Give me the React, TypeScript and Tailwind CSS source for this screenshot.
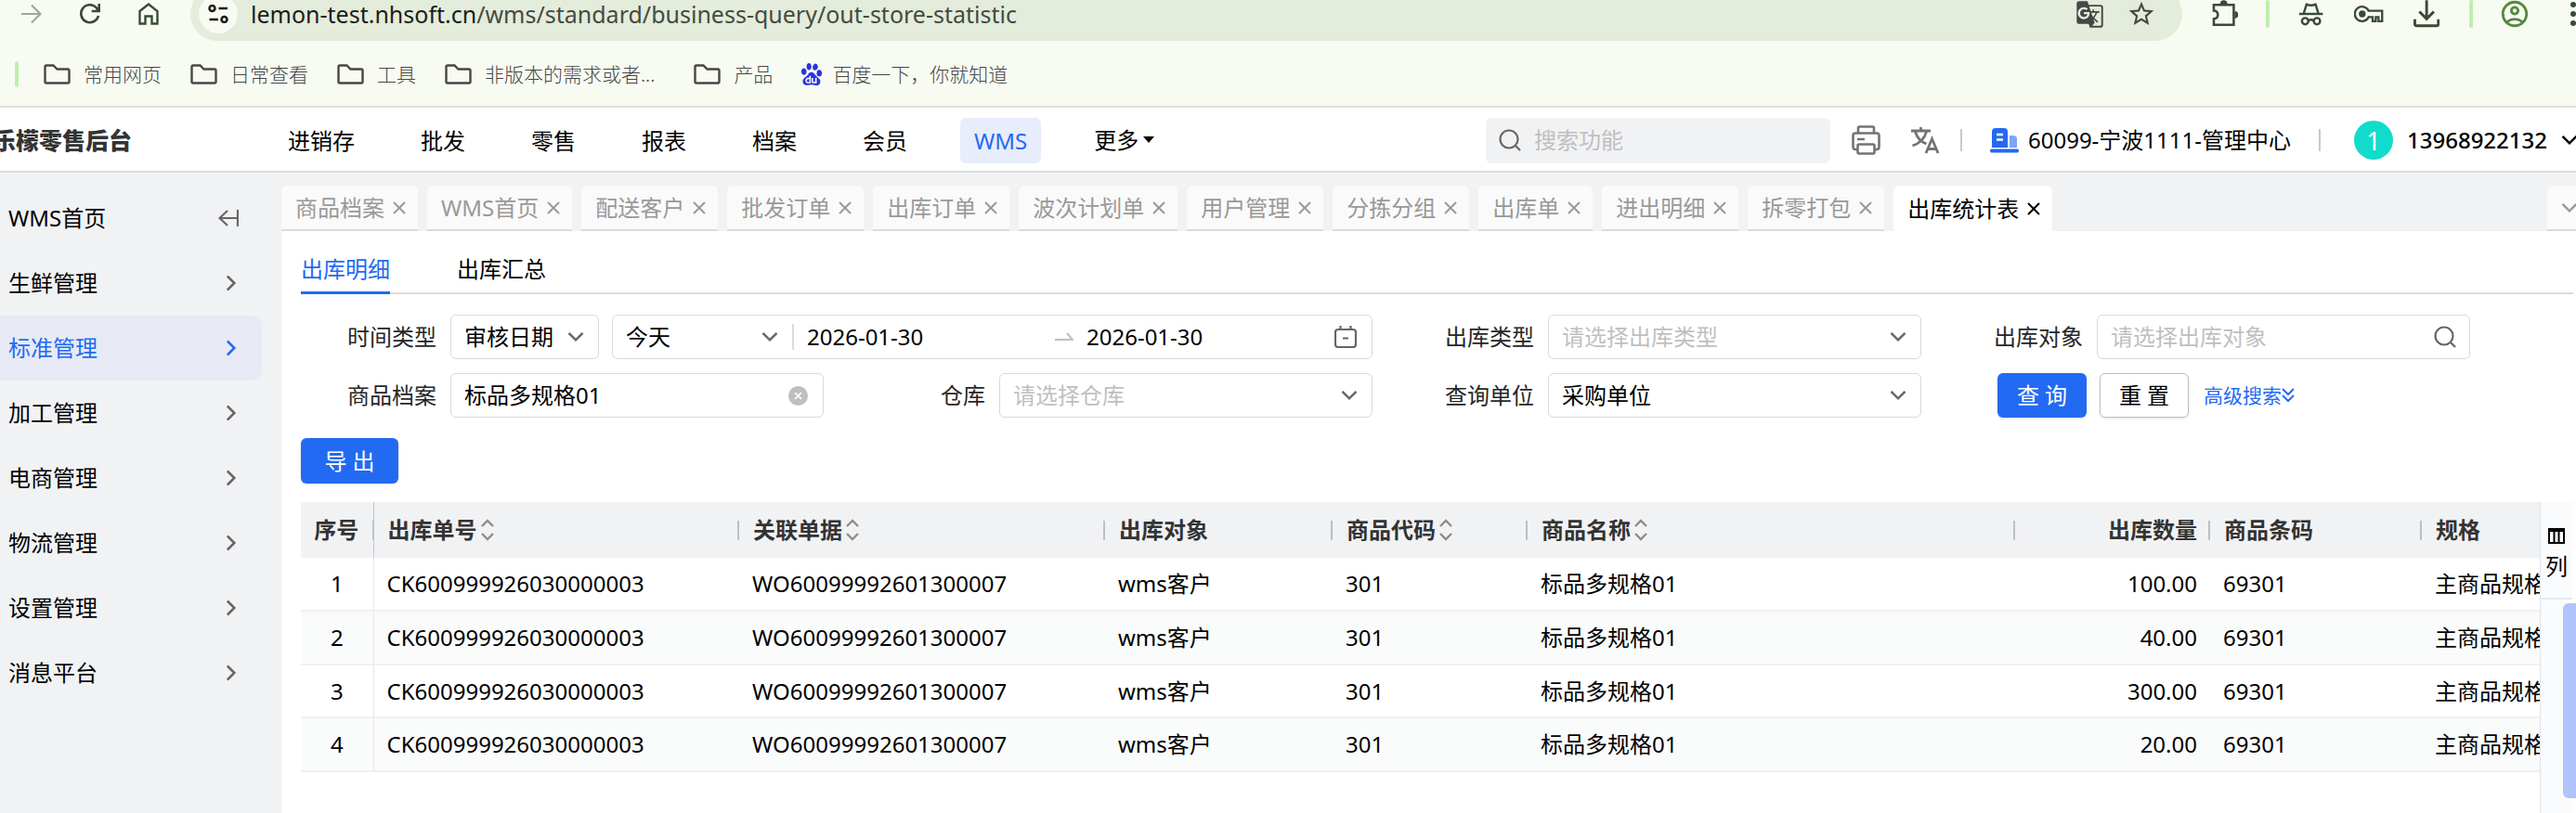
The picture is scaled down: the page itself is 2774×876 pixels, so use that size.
import React from "react";
import { MdGTranslate, MdOutlineAccountCircle, MdStarBorder } from "react-icons/md";
import { SiBaidu } from "react-icons/si";

type IconProps = { className?: string };

function Chevron({ className = "" }: IconProps): React.JSX.Element {
  return (
    <svg viewBox="0 0 24 24" fill="none" stroke="currentColor" strokeWidth="3" className={className}>
      <path d="M3 7l9 9 9-9" />
    </svg>
  );
}

function Close({ className = "" }: IconProps): React.JSX.Element {
  return (
    <svg viewBox="0 0 16 16" fill="none" stroke="currentColor" strokeWidth="2" className={className}>
      <path d="M2 2l12 12M14 2L2 14" />
    </svg>
  );
}

function Search({ className = "" }: IconProps): React.JSX.Element {
  return (
    <svg viewBox="0 0 24 24" fill="none" stroke="currentColor" strokeWidth="2.2" className={className}>
      <circle cx="11" cy="11" r="9.5" />
      <path d="M17.5 17.5L23 23" />
    </svg>
  );
}

function Folder(): React.JSX.Element {
  return (
    <svg viewBox="0 0 29 22" fill="none" stroke="#474747" strokeWidth="2.4" className="h-[22px] w-[29px] shrink-0">
      <path d="M3 1.5h7.5l4 4H26q1.5 0 1.5 1.5v12q0 1.5-1.5 1.5H3q-1.5 0-1.5-1.5V3Q1.5 1.5 3 1.5z" />
    </svg>
  );
}

function SortIcon(): React.JSX.Element {
  return (
    <svg viewBox="0 0 14 24" fill="none" stroke="#8c8c8c" strokeWidth="2.4" className="h-6 w-3.5">
      <path d="M1 8l6-6 6 6M1 16l6 6 6-6" />
    </svg>
  );
}

const folders = ["常用网页", "日常查看", "工具"];
const navItems = ["进销存", "批发", "零售", "报表", "档案", "会员", "WMS"];
const menus = ["生鲜管理", "标准管理", "加工管理", "电商管理", "物流管理", "设置管理", "消息平台"];
const tabs = [
  "商品档案",
  "WMS首页",
  "配送客户",
  "批发订单",
  "出库订单",
  "波次计划单",
  "用户管理",
  "分拣分组",
  "出库单",
  "进出明细",
  "拆零打包",
  "出库统计表",
];
const columns = [
  { title: "序号", width: "w-[78px]", sort: false },
  { title: "出库单号", width: "w-[394px]", sort: true },
  { title: "关联单据", width: "w-[394px]", sort: true },
  { title: "出库对象", width: "w-[245px]", sort: false },
  { title: "商品代码", width: "w-[210px]", sort: true },
  { title: "商品名称", width: "w-[525px]", sort: true },
  { title: "出库数量", width: "w-[210px]", sort: false },
  { title: "商品条码", width: "w-[228px]", sort: false },
  { title: "规格", width: "w-[220px]", sort: false },
];
const quantities = ["100.00", "40.00", "300.00", "20.00"];

function BrowserBar(): React.JSX.Element {
  return (
    <div className="h-[116px] overflow-hidden border-b-2 border-[#dde3d6] bg-[#f8fbf2] text-[#3a4a38]">
      <div className="-mt-3.5 flex h-[58px] items-center">
        <div className="flex w-[205px] shrink-0 items-center gap-[41px] pl-[23px]">
          <button aria-label="前进" className="text-[#a2a69d]">
            <svg viewBox="0 0 22 22" fill="none" stroke="currentColor" strokeWidth="2.2" className="size-[22px]">
              <path d="M0 11h20M11 1.5l9.5 9.5-9.5 9.5" />
            </svg>
          </button>
          <button aria-label="刷新">
            <svg viewBox="0 0 22 22" fill="none" stroke="currentColor" strokeWidth="2.6" className="size-[22px]">
              <path d="M20 13a9.500 9.500 0 1 1-2-8.500l2 3.500M20.700 0v8h-8" />
            </svg>
          </button>
          <button aria-label="主页">
            <svg viewBox="0 0 22 24" fill="none" stroke="currentColor" strokeWidth="2.4" className="h-6 w-[22px]">
              <path d="M1.500 9L11 1.500 20.500 9v13.500h-6v-8h-7v8h-6z" />
            </svg>
          </button>
        </div>
        <div className="flex h-full flex-1 items-center rounded-full bg-[#e4ecdb] pr-7 pl-[9px]">
          <button
            aria-label="网站信息"
            className="flex size-[42px] items-center justify-center rounded-full bg-[#f8fbf2] text-[#1c1c1c]"
          >
            <svg viewBox="0 0 22 20" fill="none" stroke="currentColor" strokeWidth="2.5" className="h-5 w-[22px]">
              <circle cx="4.5" cy="4" r="3" />
              <path d="M11.5 4H21M1.5 16H11" />
              <circle cx="17.5" cy="16" r="3" />
            </svg>
          </button>
          <div className="flex-1 pl-3.5 text-[25px] leading-7 text-[#444b40]">
            <span className="text-[#1b1d1a]">lemon-test.nhsoft.cn</span>/wms/standard/business-query/out-store-statistic
          </div>
          <div className="flex items-center gap-6 text-[#474747]">
            <MdGTranslate className="size-[31px]" />
            <MdStarBorder className="size-8" />
          </div>
        </div>
        <div className="flex w-[424px] shrink-0 items-center overflow-hidden pl-8">
          <svg viewBox="0 0 29 30" className="h-[30px] w-[29px]" fill="none" stroke="currentColor" strokeWidth="2.6">
            <path d="M2 5h22v22H2v-6.5q4.500-.5 4.500-4.500T2 11.500z" />
            <path d="M9 4a4 4 0 0 1 8 0zM25 12a4 4 0 0 1 0 8z" fill="currentColor" stroke="none" />
          </svg>
          <i className="ml-[30px] h-[30px] w-1 rounded-full bg-[#bdf0ad]" />
          <svg viewBox="0 0 26 26" className="ml-8 size-[26px]" fill="none" stroke="currentColor" strokeWidth="2.5">
            <path d="M0 13h26" />
            <path d="M5 12L8 2.500q5 2 10 0L21 12" />
            <circle cx="6.5" cy="21" r="3.5" />
            <circle cx="19.5" cy="21" r="3.5" />
            <path d="M10 20.500q3-2 6 0" />
          </svg>
          <svg viewBox="0 0 33 20" className="ml-[33px] h-5 w-[33px]" fill="none" stroke="currentColor" strokeWidth="2.4">
            <path d="M16 6.500A8 8 0 1 0 16 13.500h4.500V18h3.500v-4.500h3V18h4V6.500z" />
            <circle cx="9" cy="10" r="3.8" fill="currentColor" stroke="none" />
          </svg>
          <svg viewBox="0 0 29 30" className="ml-8 h-[30px] w-[29px]" fill="none" stroke="currentColor" strokeWidth="3">
            <path d="M14.500 0v20M6.500 12.500l8 8 8-8M1.500 21v5q0 2 2 2h22q2 0 2-2v-5" />
          </svg>
          <i className="ml-8 h-[30px] w-1 rounded-full bg-[#bdf0ad]" />
          <MdOutlineAccountCircle className="ml-7 size-[34px] shrink-0 text-[#56883f]" />
          <svg viewBox="0 0 6 26" className="ml-[43px] h-[26px] w-1.5 shrink-0" fill="currentColor">
            <circle cx="3" cy="3" r="3" />
            <circle cx="3" cy="13" r="3" />
            <circle cx="3" cy="23" r="3" />
          </svg>
        </div>
      </div>
      <div className="flex h-[72px] items-center text-[21px] font-light text-[#454746]">
        <i className="mr-[27px] ml-4 h-7 w-1 rounded-full bg-[#bdf0ad]" />
        {folders.map((name) => (
          <a key={name} href="#" className="mr-[31px] flex items-center gap-3.5">
            <Folder />
            {name}
          </a>
        ))}
        <a href="#" className="mr-[42px] flex items-center gap-3.5">
          <Folder />
          非版本的需求或者...
        </a>
        <a href="#" className="mr-[30px] flex items-center gap-3.5">
          <Folder />
          产品
        </a>
        <a href="#" className="flex items-center gap-2.5">
          <SiBaidu className="size-6 text-[#2932e1]" />
          百度一下，你就知道
        </a>
      </div>
    </div>
  );
}

function Header(): React.JSX.Element {
  return (
    <header className="flex h-[70px] items-center border-b-2 border-[#d9dadb] bg-white pt-0.5">
      <div className="w-[296px] shrink-0">
        <p className="-ml-2 text-[25px] font-black text-[#333]">乐檬零售后台</p>
      </div>
      <nav className="flex flex-1 items-center gap-[43px]">
        {navItems.map((name) => (
          <a
            key={name}
            href="#"
            className={
              name === "WMS"
                ? "rounded-md bg-[#e7edfb] px-[15px] leading-[49px] text-[#236af2]"
                : "px-3.5 leading-[49px]"
            }
          >
            {name}
          </a>
        ))}
        <button className="flex items-center gap-1 px-3.5">
          更多
          <svg viewBox="0 0 14 8" className="h-2 w-3.5">
            <path d="M1 0h12L7 7z" />
          </svg>
        </button>
      </nav>
      <div className="flex h-[49px] w-[371px] items-center gap-3.5 rounded-md bg-[#f1f2f4] pl-3.5 text-[#666]">
        <Search className="size-6" />
        <input
          aria-label="搜索功能"
          placeholder="搜索功能"
          className="w-64 outline-none placeholder:text-[#bfbfbf]"
        />
      </div>
      <button aria-label="打印" className="ml-[23px] text-[#737373]">
        <svg viewBox="0 0 31 32" fill="none" stroke="currentColor" strokeWidth="2.6" className="h-8 w-[31px]">
          <path d="M7 8.500V3q0-1.500 1.500-1.500h14Q24 1.500 24 3v5.500M6 26H4q-2.500 0-2.500-2.500V11Q1.500 8.500 4 8.500h23q2.500 0 2.500 2.500v12.500Q29.500 26 27 26h-2M6.500 22q0-1.500 1.500-1.500h15q1.500 0 1.500 1.500v7q0 1.500-1.500 1.500H8q-1.500 0-1.500-1.500zM6 15h8" />
        </svg>
      </button>
      <button aria-label="语言" className="ml-[33px] text-[#737373]">
        <svg viewBox="0 0 31 30" fill="none" stroke="currentColor" strokeWidth="2.8" className="h-[30px] w-[31px]">
          <path d="M0 5h21M10.500 1v4M4.500 6q3 10 12 13M16.500 6q-3 11-15 15" />
          <path d="M16 29l6.500-15.500L29 29M18.500 24.500h8.500" />
        </svg>
      </button>
      <i className="ml-[22px] h-6 w-0.5 bg-[#c8c8c8]" />
      <div className="ml-[30px] flex items-center gap-2.5">
        <svg viewBox="0 0 31 27" className="h-[27px] w-[31px]" fill="#236af2">
          <path d="M2 21V4q0-4 4-4h9q4 0 4 4v17zM1.500 22.500h28q1.500 0 1.500 2t-1.500 2h-28Q0 26.500 0 24.500t1.500-2z" />
          <path d="M21 8h4q4 0 4 4v9h-8z" opacity="0.6" />
          <path d="M7 7h7M7 12.500h7" stroke="#fff" strokeWidth="2.4" />
        </svg>
        60099-宁波1111-管理中心
      </div>
      <i className="ml-[30px] h-6 w-0.5 bg-[#c8c8c8]" />
      <span className="ml-9 flex size-[42px] items-center justify-center rounded-full bg-[#0fdccb] text-[28px] text-white">
        1
      </span>
      <button className="ml-[15px] flex w-[182px] shrink-0 items-center gap-3.5 overflow-hidden font-medium">
        13968922132
        <Chevron className="size-5 shrink-0" />
      </button>
    </header>
  );
}

function Sidebar(): React.JSX.Element {
  return (
    <aside className="w-[303px] shrink-0 pt-3.5">
      <div className="flex h-[70px] items-center justify-between pr-[46px] pl-[9px]">
        <a href="#">WMS首页</a>
        <button aria-label="收起菜单" className="text-[#666]">
          <svg viewBox="0 0 22 18" fill="none" stroke="currentColor" strokeWidth="2.2" className="h-[18px] w-[22px]">
            <path d="M21 0v18M20 9H2M10 1L1.500 9l8.500 8" />
          </svg>
        </button>
      </div>
      {menus.map((name) => (
        <button
          key={name}
          className={
            name === "标准管理"
              ? "flex h-[70px] w-[282px] items-center justify-between rounded-r-xl bg-[#e7eaf5] pr-[23px] pl-[9px] text-[#236af2]"
              : "flex h-[70px] w-[282px] items-center justify-between pr-[23px] pl-[9px]"
          }
        >
          {name}
          <Chevron className={name === "标准管理" ? "size-5 -rotate-90" : "size-5 -rotate-90 text-[#666]"} />
        </button>
      ))}
    </aside>
  );
}

function PageTabs(): React.JSX.Element {
  return (
    <div className="flex gap-2.5 pt-3.5">
      {tabs.map((name) => (
        <div
          key={name}
          className={
            name === "出库统计表"
              ? "flex h-[49px] items-center gap-2 rounded-t-md bg-white pr-3 pl-[15px]"
              : "flex h-[49px] items-center gap-2 rounded-t-md border-b-2 border-[#dadada] bg-[#fafafa] pr-3 pl-[15px] text-[#999]"
          }
        >
          <button className="leading-[45px]">{name}</button>
          <button aria-label={"关闭" + name}>
            <Close className="size-4" />
          </button>
        </div>
      ))}
      <button
        aria-label="更多页签"
        className="ml-auto flex h-[49px] w-[31px] items-center overflow-hidden rounded-tl-md border-b-2 border-[#dadada] bg-[#fafafa] pl-3.5 text-[#999]"
      >
        <Chevron className="size-5 shrink-0" />
      </button>
    </div>
  );
}

type FieldProps = {
  id: string;
  label: string;
  className?: string;
  children: React.ReactNode;
};

function Field({ id, label, className = "", children }: FieldProps): React.JSX.Element {
  return (
    <div className={"flex items-center pr-7 " + className}>
      <label htmlFor={id} className="w-[161px] shrink-0 pr-[15px] text-right text-[#262626]">
        {label}
      </label>
      {children}
    </div>
  );
}

type SelectProps = { id: string; value: string; className: string; label?: string };

function Select({ id, value, className, label }: SelectProps): React.JSX.Element {
  return (
    <div className={"relative flex h-12 items-center rounded-md " + className}>
      <select id={id} aria-label={label} className="h-full w-full appearance-none pl-3.5 outline-none">
        <option>{value}</option>
      </select>
      <Chevron className="pointer-events-none absolute right-3.5 size-5 text-[#666]" />
    </div>
  );
}

function Filters(): React.JSX.Element {
  return (
    <form className="mt-[22px] mr-[86px] grid grid-cols-4 gap-y-[15px]">
      <Field id="time-type" label="时间类型" className="col-span-2">
        <Select id="time-type" value="审核日期" className="mr-3.5 w-40 shrink-0 border border-[#d9d9d9]" />
        <div className="flex h-12 flex-1 items-center rounded-md border border-[#d9d9d9] pr-4">
          <Select id="range" label="时间范围" value="今天" className="w-[193px] shrink-0" />
          <i className="h-7 w-0.5 shrink-0 bg-[#dcdcdc]" />
          <input aria-label="开始日期" defaultValue="2026-01-30" className="w-0 flex-1 pl-3.5 outline-none" />
          <svg viewBox="0 0 20 10" fill="none" stroke="#bfbfbf" strokeWidth="2" className="h-2.5 w-5">
            <path d="M0 8h19l-6-7" />
          </svg>
          <input aria-label="结束日期" defaultValue="2026-01-30" className="w-0 flex-1 pl-3.5 outline-none" />
          <svg viewBox="0 0 24 24" fill="none" stroke="#666" strokeWidth="2.2" className="size-6">
            <rect x="1" y="4" width="22" height="19" rx="3" />
            <path d="M6.500 0v5M17.500 0v5M9 13.500h6" />
          </svg>
        </div>
      </Field>
      <Field id="out-type" label="出库类型">
        <Select id="out-type" value="请选择出库类型" className="flex-1 border border-[#d9d9d9] text-[#bfbfbf]" />
      </Field>
      <Field id="out-target" label="出库对象">
        <div className="flex h-12 flex-1 items-center rounded-md border border-[#d9d9d9] pr-3.5 pl-3.5">
          <input
            id="out-target"
            placeholder="请选择出库对象"
            className="w-0 flex-1 outline-none placeholder:text-[#bfbfbf]"
          />
          <Search className="size-6 text-[#666]" />
        </div>
      </Field>
      <Field id="goods" label="商品档案">
        <div className="flex h-12 flex-1 items-center rounded-md border border-[#d9d9d9] pr-4 pl-3.5">
          <input id="goods" defaultValue="标品多规格01" className="w-0 flex-1 outline-none" />
          <button type="button" aria-label="清空" className="rounded-full bg-[#bfbfbf] p-1.5 text-white">
            <Close className="size-[9px] stroke-[3]" />
          </button>
        </div>
      </Field>
      <Field id="warehouse" label="仓库">
        <Select id="warehouse" value="请选择仓库" className="flex-1 border border-[#d9d9d9] text-[#bfbfbf]" />
      </Field>
      <Field id="unit" label="查询单位">
        <Select id="unit" value="采购单位" className="flex-1 border border-[#d9d9d9]" />
      </Field>
      <div className="flex items-center pl-[54px]">
        <button type="button" className="h-12 w-24 rounded-md bg-[#236af2] text-white shadow-sm">
          查 询
        </button>
        <button type="button" className="ml-3.5 h-12 w-24 rounded-md border border-[#bfbfbf] shadow-sm">
          重 置
        </button>
        <a href="#" className="ml-4 flex items-center text-[21px] text-[#236af2]">
          高级搜索
          <svg viewBox="0 0 14 16" fill="none" stroke="currentColor" strokeWidth="2" className="h-4 w-3.5">
            <path d="M1 1l6 6 6-6M1 8l6 6 6-6" />
          </svg>
        </a>
      </div>
    </form>
  );
}

function ResultTable(): React.JSX.Element {
  return (
    <div className="min-w-0 flex-1 overflow-hidden">
      <table className="w-[2504px] table-fixed">
        <thead>
          <tr className="h-[60px] bg-[#f1f2f4] text-left text-[#333]">
            {columns.map((col, i) => (
              <th
                key={col.title}
                className={col.width + (i === 0 ? " border-r border-[#c4c7cc] p-0 font-bold" : " p-0 font-bold")}
              >
                <div
                  className={
                    "flex h-[21px] items-center gap-1 " +
                    (i === 0
                      ? "justify-center border-r border-[#babfc7]"
                      : i === 6
                        ? "justify-end border-r-2 border-[#babfc7] pr-3"
                        : i === 8
                          ? "pl-[15px]"
                          : "border-r-2 border-[#babfc7] pl-[15px]")
                  }
                >
                  {col.title}
                  {col.sort && <SortIcon />}
                </div>
              </th>
            ))}
          </tr>
        </thead>
        <tbody>
          {quantities.map((qty, i) => (
            <tr key={qty} className="border-b-2 border-[#eff0f1] odd:h-[57px] even:h-[58px] even:bg-[#fafbfb]">
              <td className="border-r border-[#e4e6e8] text-center">{i + 1}</td>
              <td className="pl-3.5">CK600999926030000003</td>
              <td className="pl-3.5">WO60099992601300007</td>
              <td className="pl-3.5">wms客户</td>
              <td className="pl-3.5">301</td>
              <td className="pl-3.5">标品多规格01</td>
              <td className="pr-3.5 text-right">{qty}</td>
              <td className="pl-3.5">69301</td>
              <td className="pl-3.5">主商品规格</td>
            </tr>
          ))}
        </tbody>
      </table>
    </div>
  );
}

export default function App(): React.JSX.Element {
  return (
    <div className="flex min-h-screen flex-col overflow-hidden bg-[#f1f2f4] font-['Noto_Sans','Noto_Sans_CJK_SC',sans-serif] text-[24px] leading-8 text-black">
      <BrowserBar />
      <Header />
      <div className="flex flex-1">
        <Sidebar />
        <div className="flex min-w-0 flex-1 flex-col">
          <PageTabs />
          <main className="relative flex flex-1 flex-col bg-white pl-[21px]">
            <div className="mr-[3px] flex h-[68px] items-end gap-[72px] border-b-2 border-[#dcdcdc]">
              <button className="-mb-0.5 border-b-[3px] border-[#236af2] pb-2 text-[#236af2]">出库明细</button>
              <button className="pb-[9px]">出库汇总</button>
            </div>
            <Filters />
            <div className="mt-[22px]">
              <button className="h-[49px] w-[105px] rounded-md bg-[#236af2] text-white shadow-sm">导 出</button>
            </div>
            <div className="mt-5 flex flex-1">
              <ResultTable />
              <div className="mr-1 w-[35px] shrink-0 border-l border-[#e0e3e6] bg-[#fafbfc]">
                <button className="flex h-[105px] w-full flex-col items-center border-b-2 border-[#e8eaed] pt-7">
                  <svg viewBox="0 0 18 17" fill="none" stroke="black" strokeWidth="2" className="h-[17px] w-[18px]">
                    <path d="M0 2h18" strokeWidth="4" />
                    <path d="M0 16h18M1 1v15M6.500 2v14M11.500 2v14M17 1v15" />
                  </svg>
                  <span className="mt-2">列</span>
                </button>
              </div>
            </div>
            <button
              aria-label="展开面板"
              className="absolute right-0 bottom-4 h-[210px] w-3.5 rounded-l-md bg-[#b1c3fc]"
            />
          </main>
        </div>
      </div>
    </div>
  );
}
